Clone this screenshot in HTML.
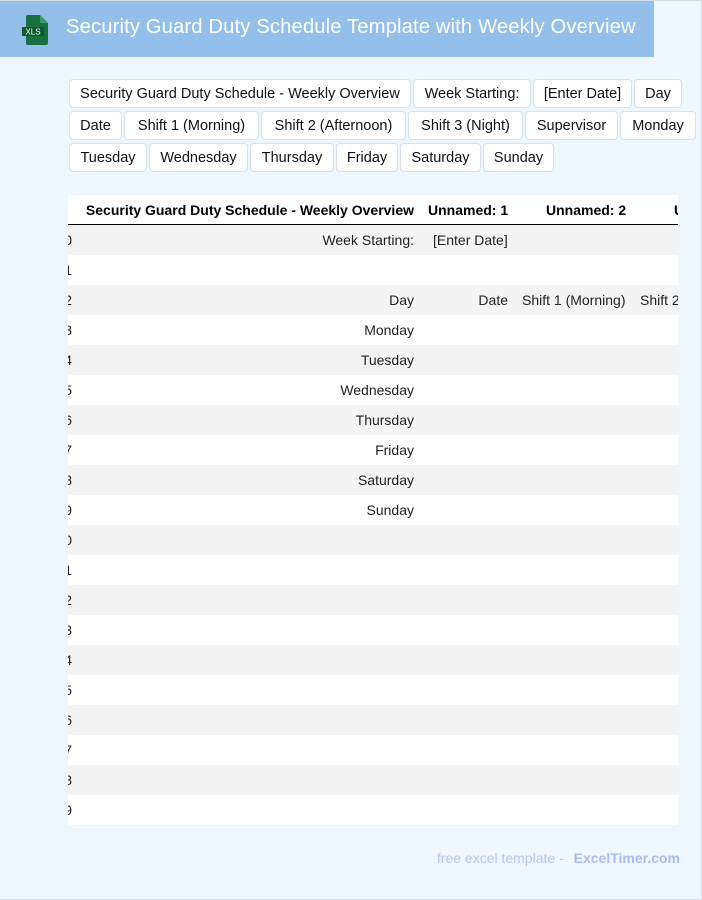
<!DOCTYPE html>
<html><head><meta charset="utf-8"><style>
*{box-sizing:border-box;margin:0;padding:0}
body{width:702px;height:900px;background:#eef6fe;position:relative;overflow:hidden;font-family:"Liberation Sans",Arial,sans-serif}
.frame{position:absolute;left:0;top:0;width:702px;height:900px;border:1px solid #d3dde8;border-left:none}
.hdr{position:absolute;left:0;top:1px;width:654px;height:56px;background:#92c0eb}
.hdr h1{position:absolute;left:66px;top:15px;font-size:20.3px;font-weight:normal;color:#fff;white-space:nowrap;letter-spacing:0.1px}
.tag{position:absolute;height:29px;background:#fff;border:1px solid #d8e0ea;border-radius:4px;font-size:14.5px;color:#111;line-height:28px;text-align:center;white-space:nowrap}
.tbl{position:absolute;left:68px;top:195px;width:610px;height:630px;overflow:hidden;background:#fff}
.row{position:absolute;left:0;width:610px;height:30px;font-size:14px;color:#222}
.row.g{background:#f4f4f4}
.c{position:absolute;top:0;line-height:30px;white-space:nowrap}
.h{font-weight:bold;color:#000}
.foot{position:absolute;right:22px;top:850px;font-size:14px;color:#b6c6ef}
.foot b{color:#a9bdf0;margin-left:6px}
</style></head><body>
<div class="frame"></div>
<div class="hdr">
<svg style="position:absolute;left:21px;top:13px" width="30" height="32" viewBox="0 0 30 32"><path d="M7 1h12l8 8v20a2 2 0 0 1-2 2H7a2 2 0 0 1-2-2V3a2 2 0 0 1 2-2z" fill="#17703f"/><path d="M19 1v8h8z" fill="#3f9a63"/><rect x="1" y="13" width="22" height="9" fill="#0f5a30"/><text x="12" y="20.5" font-size="8" fill="#fff" text-anchor="middle" font-family="Liberation Sans,sans-serif">XLS</text></svg>
<h1>Security Guard Duty Schedule Template with Weekly Overview</h1>
</div>

<div class="tag" style="left:69px;top:79px;width:342px">Security Guard Duty Schedule - Weekly Overview</div>
<div class="tag" style="left:413px;top:79px;width:118px">Week Starting:</div>
<div class="tag" style="left:533px;top:79px;width:99px">[Enter Date]</div>
<div class="tag" style="left:634px;top:79px;width:48px">Day</div>

<div class="tag" style="left:69px;top:111px;width:53px">Date</div>
<div class="tag" style="left:124px;top:111px;width:135px">Shift 1 (Morning)</div>
<div class="tag" style="left:261px;top:111px;width:145px">Shift 2 (Afternoon)</div>
<div class="tag" style="left:408px;top:111px;width:115px">Shift 3 (Night)</div>
<div class="tag" style="left:525px;top:111px;width:93px">Supervisor</div>
<div class="tag" style="left:620px;top:111px;width:76px">Monday</div>

<div class="tag" style="left:69px;top:143px;width:78px">Tuesday</div>
<div class="tag" style="left:149px;top:143px;width:99px">Wednesday</div>
<div class="tag" style="left:250px;top:143px;width:84px">Thursday</div>
<div class="tag" style="left:336px;top:143px;width:62px">Friday</div>
<div class="tag" style="left:400px;top:143px;width:81px">Saturday</div>
<div class="tag" style="left:483px;top:143px;width:71px">Sunday</div>

<div class="tbl">
<div class="row h" style="top:0;height:30px;border-bottom:1px solid #000">
<span class="c" style="right:264px">Security Guard Duty Schedule - Weekly Overview</span>
<span class="c" style="left:360px">Unnamed: 1</span>
<span class="c" style="left:478px">Unnamed: 2</span>
<span class="c" style="left:606px">U</span>
</div>
<div class="row g" style="top:30px"><span class="c" style="right:606px">0</span><span class="c" style="right:264px">Week Starting:</span><span class="c" style="left:365px">[Enter Date]</span></div>
<div class="row" style="top:60px"><span class="c" style="right:606px">1</span></div>
<div class="row g" style="top:90px"><span class="c" style="right:606px">2</span><span class="c" style="right:264px">Day</span><span class="c" style="right:170px">Date</span><span class="c" style="left:454px">Shift 1 (Morning)</span><span class="c" style="left:572px">Shift 2</span></div>
<div class="row" style="top:120px"><span class="c" style="right:606px">3</span><span class="c" style="right:264px">Monday</span></div>
<div class="row g" style="top:150px"><span class="c" style="right:606px">4</span><span class="c" style="right:264px">Tuesday</span></div>
<div class="row" style="top:180px"><span class="c" style="right:606px">5</span><span class="c" style="right:264px">Wednesday</span></div>
<div class="row g" style="top:210px"><span class="c" style="right:606px">6</span><span class="c" style="right:264px">Thursday</span></div>
<div class="row" style="top:240px"><span class="c" style="right:606px">7</span><span class="c" style="right:264px">Friday</span></div>
<div class="row g" style="top:270px"><span class="c" style="right:606px">8</span><span class="c" style="right:264px">Saturday</span></div>
<div class="row" style="top:300px"><span class="c" style="right:606px">9</span><span class="c" style="right:264px">Sunday</span></div>
<div class="row g" style="top:330px"><span class="c" style="right:606px">10</span></div>
<div class="row" style="top:360px"><span class="c" style="right:606px">11</span></div>
<div class="row g" style="top:390px"><span class="c" style="right:606px">12</span></div>
<div class="row" style="top:420px"><span class="c" style="right:606px">13</span></div>
<div class="row g" style="top:450px"><span class="c" style="right:606px">14</span></div>
<div class="row" style="top:480px"><span class="c" style="right:606px">15</span></div>
<div class="row g" style="top:510px"><span class="c" style="right:606px">16</span></div>
<div class="row" style="top:540px"><span class="c" style="right:606px">17</span></div>
<div class="row g" style="top:570px"><span class="c" style="right:606px">18</span></div>
<div class="row" style="top:600px"><span class="c" style="right:606px">19</span></div>
</div>

<div class="foot">free excel template - <b>ExcelTimer.com</b></div>
</body></html>
